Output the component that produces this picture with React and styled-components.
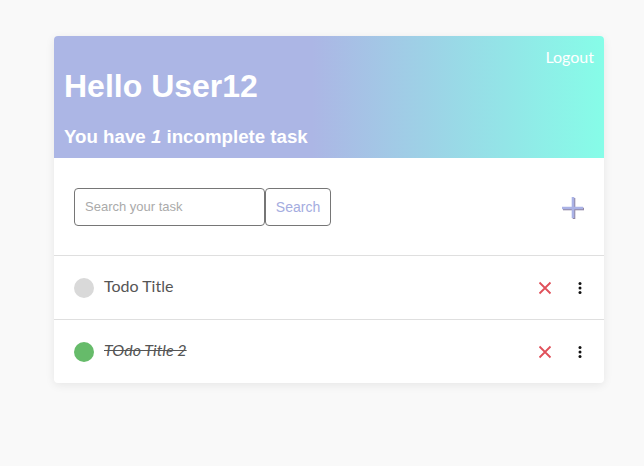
import styled, { createGlobalStyle } from "styled-components";

const GlobalStyle = createGlobalStyle`
  body {
    margin: 0;
    background: #f9f9f9;
    font-family: "Liberation Sans", Arial, sans-serif;
  }
`;

const Page = styled.div`
  padding: 36px 40px 40px 54px;
`;

const Card = styled.div`
  width: 550px;
  background: #fff;
  border-radius: 4px;
  overflow: hidden;
  box-shadow: 0 2px 10px rgba(0, 0, 0, 0.08);
`;

const Header = styled.header`
  display: flex;
  flex-direction: column;
  height: 122px;
  box-sizing: border-box;
  padding: 11px 10px 0 10px;
  color: #fff;
  background: linear-gradient(to right, #acb6e5 47%, #86fde8 100%);
`;

const Logout = styled.button`
  align-self: flex-end;
  border: none;
  background: none;
  padding: 0;
  color: #fff;
  font-family: "Lato", sans-serif;
  font-size: 16px;
  line-height: 19px;
  cursor: pointer;
`;

const Hello = styled.h1`
  margin: 2px 0 0;
  font-size: 32px;
  line-height: 37px;
  font-weight: bold;
`;

const Incomplete = styled.h2`
  margin: 21px 0 0;
  font-size: 18.7px;
  line-height: 21px;
  font-weight: bold;
`;

const Toolbar = styled.div`
  display: flex;
  align-items: center;
  justify-content: space-between;
  height: 97px;
  padding: 0 20px;
`;

const SearchForm = styled.form`
  display: flex;
`;

const SearchInput = styled.input`
  width: 191px;
  height: 38px;
  box-sizing: border-box;
  border: 1px solid #767676;
  border-radius: 4px;
  padding: 0 10px;
  font-family: "Liberation Sans", Arial, sans-serif;
  font-size: 13px;
  outline: none;
  &::placeholder {
    color: #aaa;
  }
`;

const SearchButton = styled.button`
  height: 38px;
  width: 66px;
  border: 1px solid #767676;
  border-radius: 4px;
  background: #fff;
  color: #a4ace0;
  font-family: "Liberation Sans", Arial, sans-serif;
  font-size: 14px;
  padding: 0;
`;

const AddButton = styled.button`
  border: none;
  background: none;
  padding: 0;
  margin: 2px -3px 0 0;
  display: flex;
`;

const Row = styled.div`
  display: flex;
  align-items: center;
  height: 63px;
  padding: 0 22px 0 20px;
  border-top: 1px solid #dfdfdf;
`;

const Dot = styled.span`
  width: 20px;
  height: 20px;
  border-radius: 50%;
  background: ${(p) => (p.done ? "#66bb6a" : "#d9d9d9")};
  margin-right: 10px;
`;

const Title = styled.span`
  flex: 1;
  font-family: "Lato", sans-serif;
  font-size: 16px;
  line-height: 18px;
  margin-bottom: 3px;
  color: #555;
  font-style: ${(p) => (p.done ? "italic" : "normal")};
  text-decoration: ${(p) => (p.done ? "line-through" : "none")};
`;

const IconButton = styled.button`
  border: none;
  background: none;
  padding: 0;
  display: flex;
  margin-left: ${(p) => p.gap || 0}px;
`;

function PlusIcon() {
  return (
    <svg width="28" height="28" viewBox="0 0 28 28">
      <g stroke="#6e6288" strokeWidth="2.6" opacity="0.75">
        <line x1="15" y1="4" x2="15" y2="25" />
        <line x1="4" y1="15" x2="25" y2="15" />
      </g>
      <g stroke="#aab2e6" strokeWidth="2.6">
        <line x1="14" y1="3" x2="14" y2="24" />
        <line x1="3" y1="14" x2="24" y2="14" />
      </g>
    </svg>
  );
}

function CloseIcon() {
  return (
    <svg width="14" height="14" viewBox="0 0 14 14">
      <path d="M1.5 1.5 L12.5 12.5 M12.5 1.5 L1.5 12.5" stroke="#e0505a" strokeWidth="1.8" />
    </svg>
  );
}

function KebabIcon() {
  return (
    <svg width="4" height="12" viewBox="0 0 4 12">
      <circle cx="2" cy="1.5" r="1.5" fill="#111" />
      <circle cx="2" cy="6" r="1.5" fill="#111" />
      <circle cx="2" cy="10.5" r="1.5" fill="#111" />
    </svg>
  );
}

const todos = [
  { id: 1, title: "Todo Title", done: false },
  { id: 2, title: "TOdo Title 2", done: true },
];

export default function App() {
  const left = todos.filter((t) => !t.done).length;
  return (
    <>
      <GlobalStyle />
      <Page>
        <Card>
          <Header>
            <Logout>Logout</Logout>
            <Hello>Hello User12</Hello>
            <Incomplete>
              You have <i>{left}</i> incomplete task
            </Incomplete>
          </Header>
          <Toolbar>
            <SearchForm onSubmit={(e) => e.preventDefault()}>
              <SearchInput placeholder="Search your task" />
              <SearchButton>Search</SearchButton>
            </SearchForm>
            <AddButton>
              <PlusIcon />
            </AddButton>
          </Toolbar>
          {todos.map((t) => (
            <Row key={t.id}>
              <Dot done={t.done} />
              <Title done={t.done}>{t.title}</Title>
              <IconButton>
                <CloseIcon />
              </IconButton>
              <IconButton gap={26}>
                <KebabIcon />
              </IconButton>
            </Row>
          ))}
        </Card>
      </Page>
    </>
  );
}
